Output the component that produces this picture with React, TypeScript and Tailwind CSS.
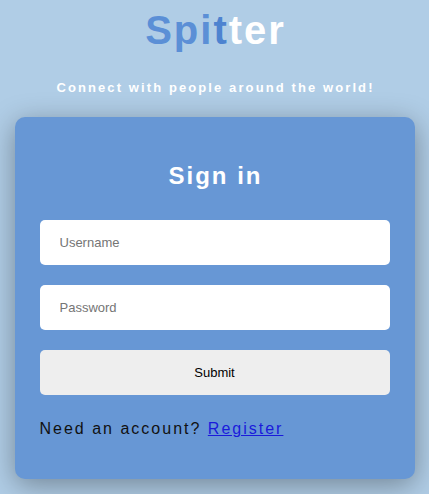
import React from "react";

export default function App() {
  return (
    <div className="min-h-screen bg-[#b0cde6] flex flex-col items-center font-['Liberation_Sans',Arial,sans-serif] overflow-hidden">
      {/* Logo */}
      <h1 className="mt-[10px] text-[40px] leading-[40px] font-bold tracking-[2px] pl-[2px]">
        <span className="text-[#5b8fd6]">Spi</span>
        <span className="text-[#4d83d0]">t</span>
        <span className="text-white">ter</span>
      </h1>
      <p className="mt-[30px] text-[13px] leading-[16px] font-bold tracking-[2.1px] pl-[2px] text-white">
        Connect with people around the world!
      </p>

      {/* Carte de connexion */}
      <div className="mt-[21px] w-[400px] rounded-[10px] bg-[#6797d5] px-[25px] pt-[44px] pb-[39px] shadow-[0_6px_28px_rgba(0,0,0,0.35)]">
        <h2 className="text-center text-[24px] leading-[30px] font-bold tracking-[2px] pl-[2px] text-white">
          Sign in
        </h2>
        <form className="mt-[29px] flex flex-col gap-[20px]" onSubmit={(e) => e.preventDefault()}>
          <input
            type="text"
            placeholder="Username"
            className="h-[45px] w-full rounded-[5px] bg-white px-[20px] text-[13px] text-black placeholder:text-[#757575] outline-none"
          />
          <input
            type="password"
            placeholder="Password"
            className="h-[45px] w-full rounded-[5px] bg-white px-[20px] text-[13px] text-black placeholder:text-[#757575] outline-none"
          />
          <button
            type="submit"
            className="h-[45px] w-full rounded-[5px] bg-[#eeeeee] text-[13px] text-black"
          >
            Submit
          </button>
        </form>
        <p className="mt-[23px] text-[16px] leading-[22px] tracking-[2px] text-[#111]">
          Need an account?{" "}
          <a href="#" className="text-[#1a1adb] underline">
            Register
          </a>
        </p>
      </div>
    </div>
  );
}
